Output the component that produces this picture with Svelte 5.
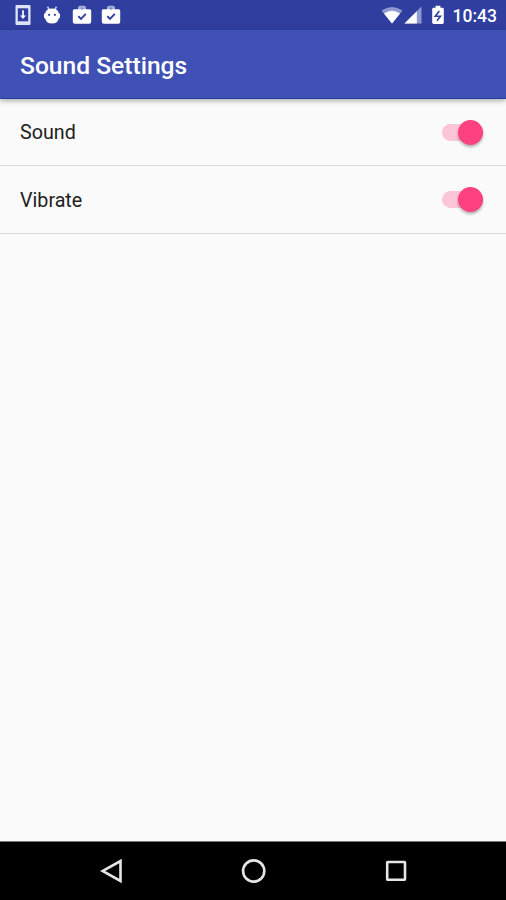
<script lang="ts">
	type Setting = { id: string; label: string; enabled: boolean };

	let settings = $state<Setting[]>([
		{ id: 'sound', label: 'Sound', enabled: true },
		{ id: 'vibrate', label: 'Vibrate', enabled: true }
	]);

	function toggle(setting: Setting) {
		setting.enabled = !setting.enabled;
	}
</script>

{#snippet workBag()}
	<svg class="bag" width="20" height="20" viewBox="0 0 20 20" aria-hidden="true">
		<path d="M6 5V3q0-2.200 2.200-2.200h3.600Q14 .8 14 3v2z" fill="#a9b1df" />
		<path
			d="M2.300 4.300h15.400q1.500 0 1.500 1.500v11q0 2-2 2H2.800q-2 0-2-2v-11q0-1.500 1.500-1.500z"
			fill="#fff"
		/>
		<circle cx="10" cy="3.400" r="1.200" fill="#7f8aca" />
		<path d="M6.300 11.200l2.700 2.700 4.800-5" fill="none" stroke="#303f9f" stroke-width="1.900" />
	</svg>
{/snippet}

<div class="screen">
	<div class="status-bar">
		<div class="status-bar__group">
			<svg width="16" height="20" viewBox="0 0 16 20" aria-hidden="true">
				<rect x="0.500" width="15" height="20" rx="1" fill="#dfe3f6" />
				<rect x="2.800" y="3.300" width="10.400" height="13" fill="#303f9f" />
				<path d="M8 5.200v6" stroke="#fff" stroke-width="1.700" />
				<path d="M5 10.500h6L8 14z" fill="#fff" />
			</svg>
			<svg class="droid" width="18" height="20" viewBox="0 0 18 20" aria-hidden="true">
				<path d="M4.600 1.600l1.700 3.600M13.400 1.600l-1.700 3.600" stroke="#c9cfec" stroke-width="1.500" />
				<path
					d="M2.200 8.200Q3 3.400 9 3.400t6.800 4.800l1.200.6v4l-1.200.6Q14.500 18.600 9 18.600t-6.800-5.200L1 12.800v-4z"
					fill="#fff"
				/>
				<circle cx="6.100" cy="9.800" r="1.100" fill="#303f9f" />
				<circle cx="11.900" cy="9.800" r="1.100" fill="#303f9f" />
			</svg>
			{@render workBag()}
			{@render workBag()}
		</div>

		<div class="status-bar__group">
			<svg width="22" height="18" viewBox="0 0 22 18" aria-hidden="true">
				<path d="M.5 4.600Q11-2.500 21.500 4.600L11 17.500z" fill="#8f99d0" />
				<path d="M3 7.500Q11 2.200 19 7.500L11 17.500z" fill="#fff" />
			</svg>
			<svg class="signal" width="18" height="18" viewBox="0 0 18 18" aria-hidden="true">
				<path d="M17.500.5v17H.5z" fill="#8f99d0" />
				<path d="M12.800 5.200v12.300H.5z" fill="#fff" />
			</svg>
			<svg class="battery" width="12" height="20" viewBox="0 0 12 20" aria-hidden="true">
				<path
					d="M3.600.8h4.800v2h2q1.400 0 1.400 1.400v13.400q0 1.400-1.400 1.400H1.600Q.2 19 .2 17.600V4.200q0-1.400 1.400-1.400h2z"
					fill="#fff"
				/>
				<path d="M7.300 6L3.300 11.200h5.200L5 15.800" fill="none" stroke="#303f9f" stroke-width="1.600" />
			</svg>
			<span class="status-bar__time">10:43</span>
		</div>
	</div>

	<header class="app-bar">
		<h1>Sound Settings</h1>
	</header>

	<main>
		{#each settings as setting (setting.id)}
			<div class="setting">
				<span>{setting.label}</span>
				<button
					class="switch"
					class:switch--on={setting.enabled}
					type="button"
					role="switch"
					aria-checked={setting.enabled}
					aria-label={setting.label}
					onclick={() => toggle(setting)}
				>
					<span class="switch__thumb"></span>
				</button>
			</div>
		{/each}
	</main>

	<nav class="nav-bar">
		<button type="button" aria-label="Back">
			<svg width="24" height="26" viewBox="0 0 24 26" aria-hidden="true">
				<path d="M20.500 3v20L2.500 13z" />
			</svg>
		</button>
		<button type="button" aria-label="Home">
			<svg width="26" height="26" viewBox="0 0 26 26" aria-hidden="true">
				<circle cx="12.700" cy="13" r="10.600" />
			</svg>
		</button>
		<button type="button" aria-label="Recent apps">
			<svg width="24" height="26" viewBox="0 0 24 26" aria-hidden="true">
				<rect x="3.200" y="4" width="17.800" height="17.800" rx="0.500" />
			</svg>
		</button>
	</nav>
</div>

<style>
	:global(body) {
		margin: 0;
	}

	.screen {
		display: flex;
		flex-direction: column;
		height: 900px;
		background: #fafafa;
		color: #212121;
		font-family: Roboto, 'Noto Sans', sans-serif;
	}

	svg {
		display: block;
		flex: none;
	}

	/* Status bar */
	.status-bar {
		display: flex;
		justify-content: space-between;
		box-sizing: border-box;
		height: 30px;
		padding: 0 9px 0 15px;
		background: #303f9f;
	}

	.status-bar__group {
		display: flex;
		align-items: center;
	}

	.droid {
		margin: 0 10.500px 0 12.300px;
	}

	.bag + .bag {
		margin-left: 9.500px;
	}

	.signal {
		margin-left: 1px;
	}

	.battery {
		margin: 0 9px 0 10px;
	}

	.status-bar__time {
		padding-top: 2px;
		color: #fff;
		font-size: 17.500px;
		font-weight: 500;
		line-height: 28px;
	}

	/* App bar */
	.app-bar {
		display: flex;
		align-items: center;
		box-sizing: border-box;
		height: 69px;
		padding: 4px 20px 0;
		border-bottom: 1px solid #24409f;
		background: #3f51b5;
		box-shadow: 0 2px 5px rgba(0, 0, 0, 0.3);
		z-index: 1;
	}

	h1 {
		margin: 0;
		color: #fff;
		font-size: 24.600px;
		font-weight: 500;
		line-height: 30px;
	}

	/* Settings list */
	main {
		flex: 1;
	}

	.setting {
		display: flex;
		align-items: center;
		justify-content: space-between;
		box-sizing: border-box;
		height: 68px;
		padding: 0 23px 0 20px;
		border-bottom: 1px solid #dadada;
		font-size: 19.700px;
		line-height: 24px;
	}

	.setting:first-child {
		height: 67px;
	}

	.setting > span {
		padding-top: 2px;
	}

	.switch {
		display: flex;
		align-items: center;
		width: 41px;
		height: 17px;
		padding: 0;
		border: 0;
		border-radius: 9px;
		background: #bdbdbd;
	}

	.switch__thumb {
		width: 25px;
		height: 25px;
		flex: none;
		border-radius: 50%;
		background: #f1f1f1;
		box-shadow: 0 2px 3px rgba(0, 0, 0, 0.3);
	}

	.switch--on {
		justify-content: flex-end;
		background: #fcc5d8;
	}

	.switch--on .switch__thumb {
		background: #ff4081;
	}

	/* System navigation */
	.nav-bar {
		display: flex;
		box-sizing: border-box;
		height: 59px;
		padding: 0 39px 0 41px;
		border-top: 1px solid #777;
		background: #000;
	}

	.nav-bar button {
		display: flex;
		align-items: center;
		justify-content: center;
		flex: 1;
		padding: 0;
		border: 0;
		background: none;
	}

	.nav-bar svg {
		fill: none;
		stroke: #e6e6e6;
		stroke-width: 2.600;
	}
</style>
